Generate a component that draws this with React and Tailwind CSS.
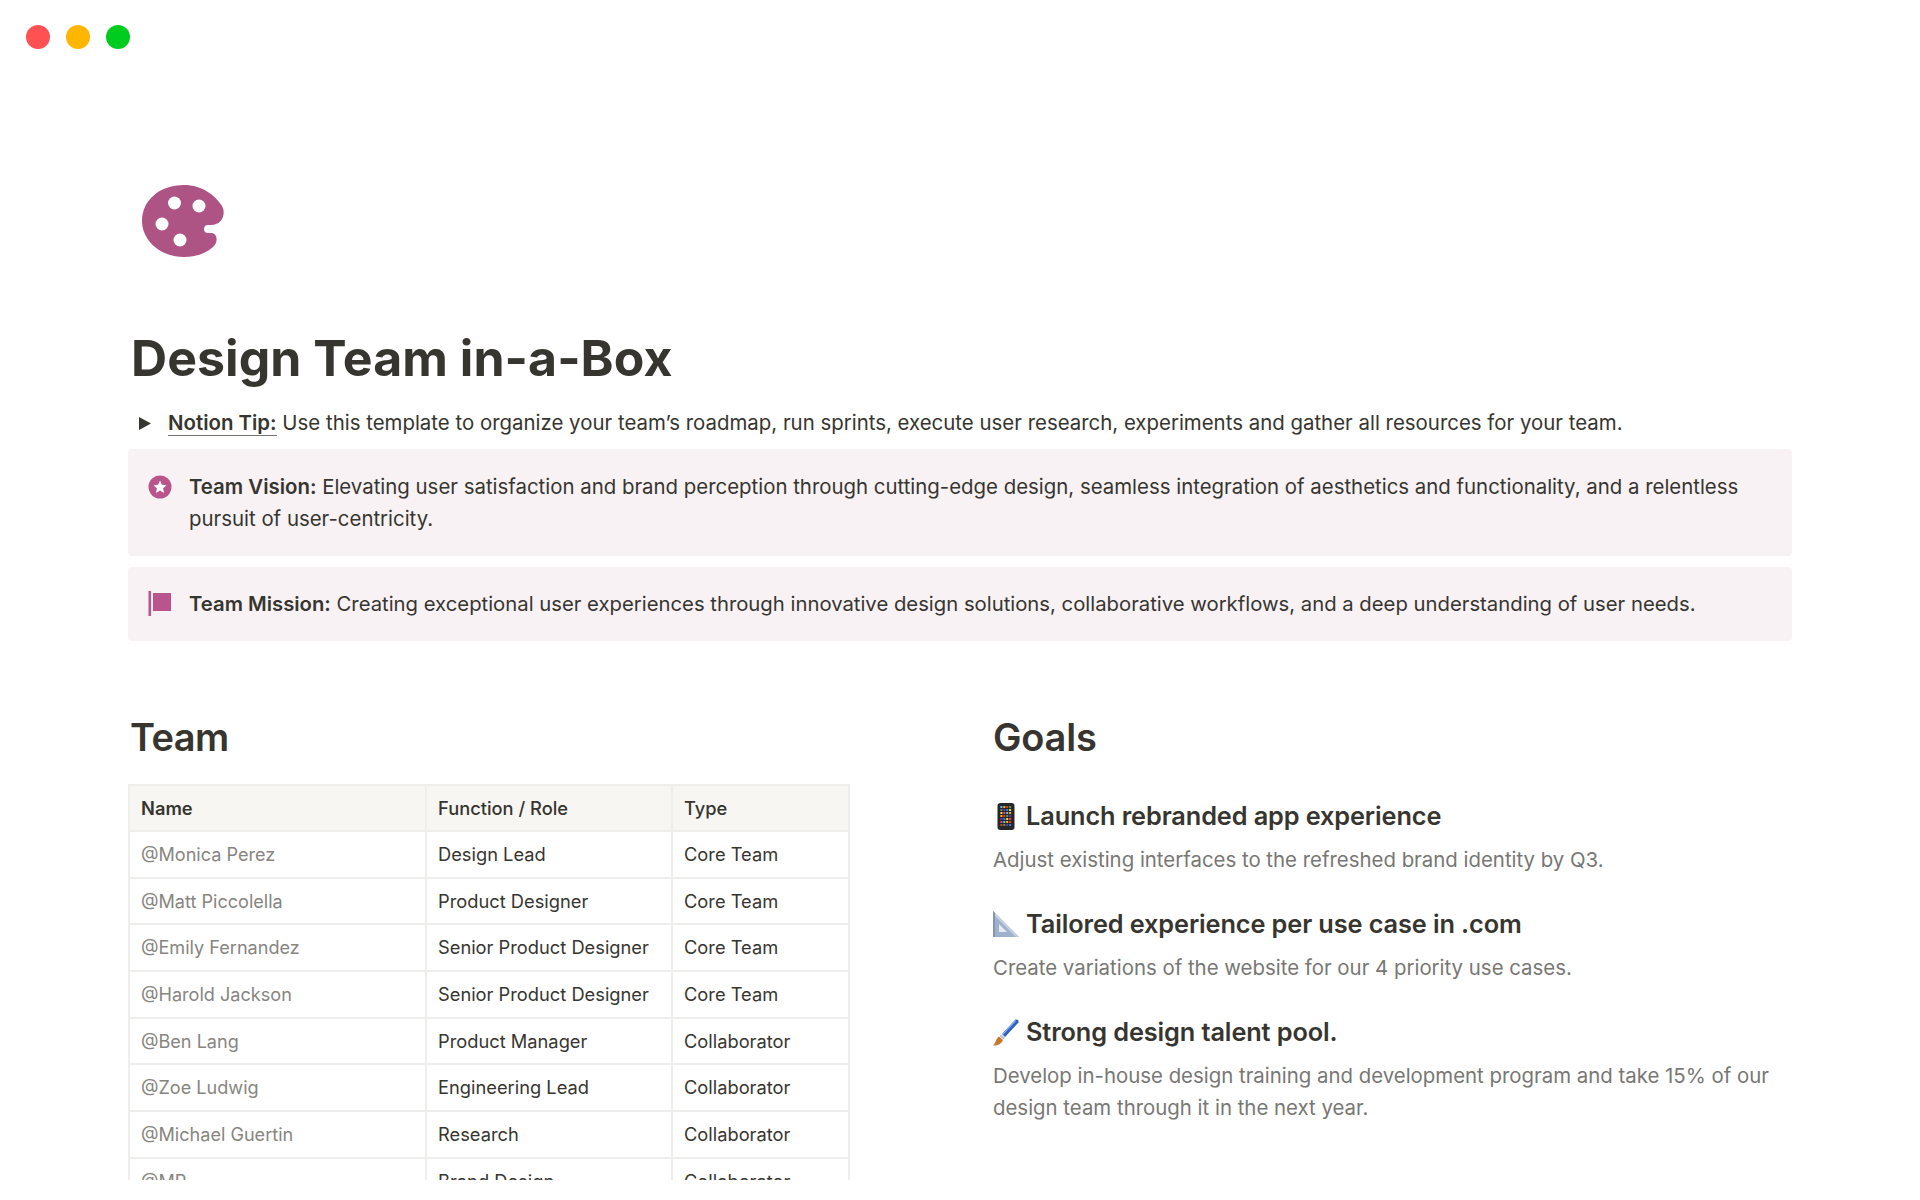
const team = [
  ["@Monica Perez", "Design Lead", "Core Team"],
  ["@Matt Piccolella", "Product Designer", "Core Team"],
  ["@Emily Fernandez", "Senior Product Designer", "Core Team"],
  ["@Harold Jackson", "Senior Product Designer", "Core Team"],
  ["@Ben Lang", "Product Manager", "Collaborator"],
  ["@Zoe Ludwig", "Engineering Lead", "Collaborator"],
  ["@Michael Guertin", "Research", "Collaborator"],
  ["@MP", "Brand Design", "Collaborator"],
];

function PaletteIcon() {
  return (
    <svg width="82" height="72" viewBox="0 0 82 72" className="block">
      <path
        d="M42 0C60 0 73 10 80 21C84 28 81 40 69 40L66 40A4 4 0 0 0 66 48L70 48C76 49 76 58 71 62C63 69 53 72 42 72C18 72 0 55 0 36C0 15 18 0 42 0Z"
        fill="#ae5485"
      />
      <circle cx="32.5" cy="18" r="6.5" fill="#fff" />
      <circle cx="57" cy="21" r="6.5" fill="#fff" />
      <circle cx="20" cy="39" r="6.5" fill="#fff" />
      <circle cx="38" cy="55" r="6.5" fill="#fff" />
    </svg>
  );
}

function StarCircleIcon() {
  return (
    <svg width="24" height="24" viewBox="0 0 24 24" className="block">
      <circle cx="12" cy="12" r="11.5" fill="#b9558c" />
      <path
        d="M12 5.4l1.9 4.3 4.6.5-3.4 3.1 1 4.6-4.1-2.4-4.1 2.4 1-4.6-3.4-3.1 4.6-.5z"
        fill="#fff"
      />
    </svg>
  );
}

function FlagIcon() {
  return (
    <svg width="24" height="26" viewBox="0 0 24 26" className="block">
      <rect x="0.5" y="0" width="2.6" height="25" fill="#b9558c" />
      <rect x="5" y="2" width="18" height="18" fill="#b9558c" />
    </svg>
  );
}

function PhoneEmoji() {
  const colors = ["#4fc3f7", "#ffb300", "#e53935", "#43a047", "#8e24aa", "#1e88e5", "#fdd835", "#ec407a"];
  const dots = [];
  for (let r = 0; r < 7; r++) {
    for (let c = 0; c < 4; c++) {
      dots.push(<rect key={r + "-" + c} x={3.4 + c * 2.9} y={3 + r * 3} width="2" height="2" fill={colors[(r * 3 + c) % 8]} />);
    }
  }
  return (
    <svg width="26" height="27" viewBox="0 0 18 27" preserveAspectRatio="xMidYMid meet" className="block">
      <rect x="0.5" y="0" width="17" height="27" rx="3" fill="#26272b" />
      {dots}
    </svg>
  );
}

function RulerEmoji() {
  return (
    <svg width="26" height="26" viewBox="0 0 26 26" className="block">
      <path d="M0 0L26 26H0Z" fill="#9fb1cc" />
      <path d="M6 13L14 21H6Z" fill="#e6ebf3" />
      <path d="M0 0L26 26H23L0 3Z" fill="#c5d2e4" />
      <path d="M0 0V26H2V2Z" fill="#8397b5" />
    </svg>
  );
}

function BrushEmoji() {
  return (
    <svg width="26" height="27" viewBox="0 0 26 27" className="block">
      <path d="M9 15L22 1C24 0 26 1 25.5 3.5L12 18Z" fill="#2f5fc4" />
      <path d="M9 15L22 1L23 2L10 16Z" fill="#8fb2ee" />
      <path d="M8 15.5L12 19L10.5 20.5L6.5 17Z" fill="#b9bec8" />
      <path d="M6 17.5L10 21C8.5 25 4 27 0 26.5C2.5 25 2.5 20 6 17.5Z" fill="#c9792e" />
    </svg>
  );
}

function Callout({ icon, iconClass, className, children }) {
  return (
    <div className={"flex bg-[#f8f2f5] rounded-[4px] pl-[20px] pr-[40px] " + className}>
      <div className={"w-[24px] shrink-0 " + iconClass}>{icon}</div>
      <div className="ml-[17px]">{children}</div>
    </div>
  );
}

function Goal({ emoji, title, text, className }) {
  return (
    <div className={className}>
      <div className="flex items-center h-[34px]">
        <div className="w-[33px] shrink-0">{emoji}</div>
        <h3 className="text-[25.3px] leading-[34px] font-semibold tracking-[-0.1px]">{title}</h3>
      </div>
      <p className="mt-[11px] text-[20.4px] leading-[32px] text-[#787774]">{text}</p>
    </div>
  );
}

export default function App() {
  return (
    <div
      className="relative h-[1200px] w-[1920px] overflow-hidden bg-white text-[#37352f]"
      style={{ fontFamily: "Inter, 'Liberation Sans', sans-serif" }}
    >
      <div className="flex gap-[16px] pl-[26px] pt-[25px]">
        <div className="w-[24px] h-[24px] rounded-full bg-[#ff5152]" />
        <div className="w-[24px] h-[24px] rounded-full bg-[#ffb600]" />
        <div className="w-[24px] h-[24px] rounded-full bg-[#00cc1f]" />
      </div>

      <div className="w-[1792px] pl-[128px]">
        <div className="pl-[14px] pt-[136px]">
          <PaletteIcon />
        </div>

        <h1 className="mt-[69px] pl-[3px] text-[50px] leading-[64px] font-bold tracking-[0.05px] text-[#37352f]">
          Design Team in-a-Box
        </h1>

        <div className="mt-[17px] flex items-center h-[32px] text-[20.4px] leading-[32px]">
          <svg width="12" height="13" viewBox="0 0 12 13" className="ml-[11px] shrink-0">
            <path d="M0 0L12 6.5L0 13Z" fill="#37352f" />
          </svg>
          <p className="ml-[17px] tracking-[0.01px]">
            <span className="font-semibold border-b border-[#75736e]">Notion Tip:</span> Use this template to organize your team’s roadmap, run sprints, execute user research, experiments and gather all resources for your team.
          </p>
        </div>

        <Callout icon={<StarCircleIcon />} iconClass="mt-[4px]" className="mt-[10px] pt-[22px] pb-[21px]">
          <p className="text-[20.4px] leading-[32px]">
            <span className="font-semibold">Team Vision:</span> Elevating user satisfaction and brand perception through cutting-edge design, seamless integration of aesthetics and functionality, and a relentless pursuit of user-centricity.
          </p>
        </Callout>

        <Callout icon={<FlagIcon />} iconClass="mt-[3px]" className="mt-[11px] pt-[21px] pb-[21px]">
          <p className="text-[20.3px] leading-[32px]">
            <span className="font-semibold">Team Mission:</span> Creating exceptional user experiences through innovative design solutions, collaborative workflows, and a deep understanding of user needs.
          </p>
        </Callout>

        <div className="flex mt-[71px]">
          <div className="w-[722px] shrink-0">
            <h2 className="pl-[2px] text-[38px] leading-[50px] font-semibold tracking-[-0.6px]">Team</h2>
            <div className="mt-[22px] h-[396px] overflow-hidden border-l-2 border-r-2 border-[#eeeeed] text-[18.3px]">
              <div className="grid grid-cols-[297px_246px_175px] h-[48px] bg-[#f7f6f3] border-t-2 border-b-2 border-[#eeeeed] font-medium">
                <div className="px-[11px] leading-[44px] border-r-2 border-[#eeeeed] font-semibold">Name</div>
                <div className="px-[11px] leading-[44px] border-r-2 border-[#eeeeed]">Function / Role</div>
                <div className="px-[11px] leading-[44px]">Type</div>
              </div>
              {team.map((row) => (
                <div key={row[0]} className="grid grid-cols-[297px_246px_175px] h-[46.67px] border-b-2 border-[#eeeeed]">
                  <div className="px-[11px] leading-[44px] border-r-2 border-[#eeeeed] text-[18.1px] text-[#87857f]">{row[0]}</div>
                  <div className="px-[11px] leading-[44px] border-r-2 border-[#eeeeed]">{row[1]}</div>
                  <div className="px-[11px] leading-[44px]">{row[2]}</div>
                </div>
              ))}
            </div>
          </div>

          <div className="ml-[143px] w-[800px]">
            <h2 className="text-[38px] leading-[50px] font-semibold tracking-[-0.2px]">Goals</h2>
            <Goal
              className="mt-[37px]"
              emoji={<PhoneEmoji />}
              title="Launch rebranded app experience"
              text="Adjust existing interfaces to the refreshed brand identity by Q3."
            />
            <Goal
              className="mt-[31px]"
              emoji={<RulerEmoji />}
              title="Tailored experience per use case in .com"
              text="Create variations of the website for our 4 priority use cases."
            />
            <Goal
              className="mt-[31px]"
              emoji={<BrushEmoji />}
              title="Strong design talent pool."
              text="Develop in-house design training and development program and take 15% of our design team through it in the next year."
            />
          </div>
        </div>
      </div>
    </div>
  );
}
